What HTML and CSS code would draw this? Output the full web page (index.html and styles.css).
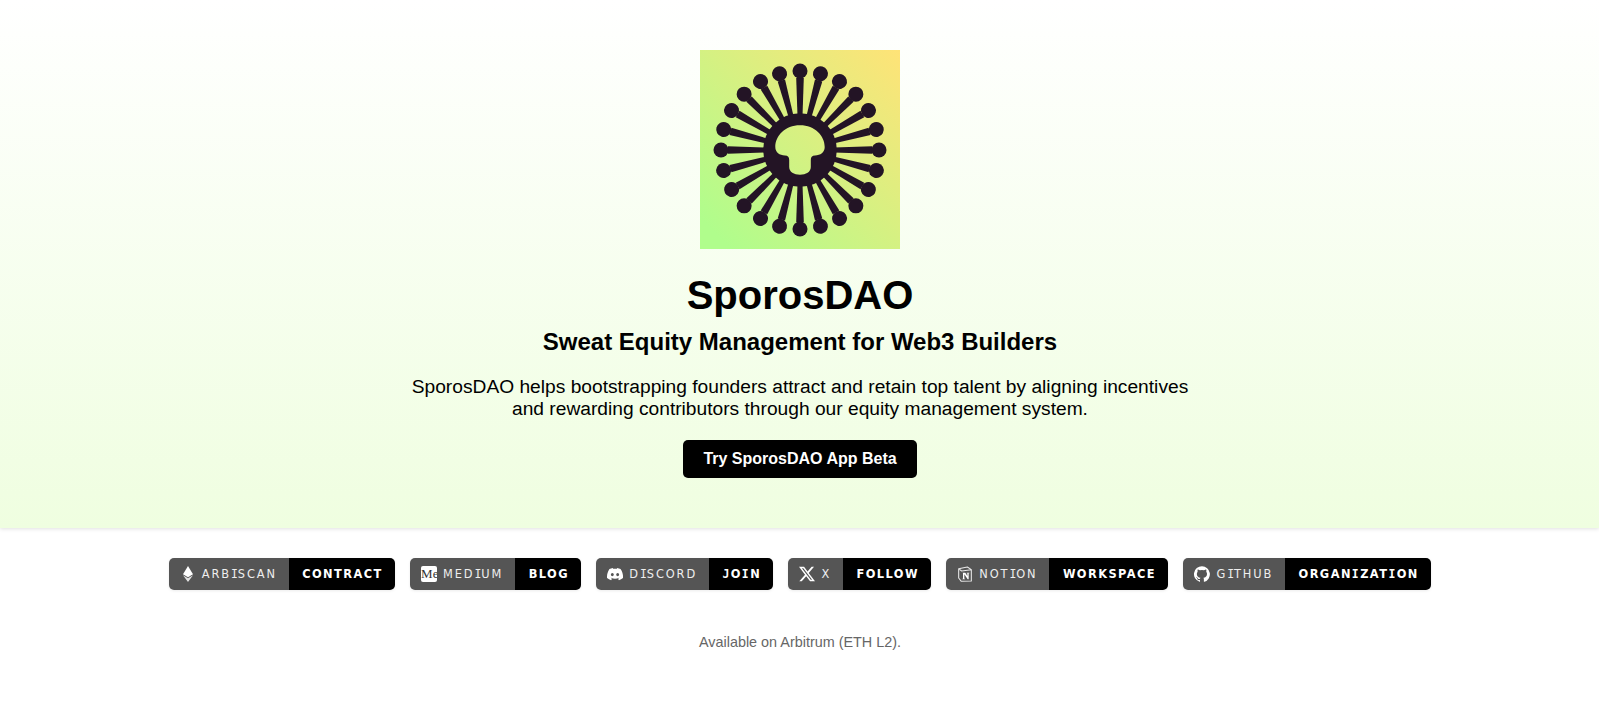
FILE: index.html
```html
<!DOCTYPE html>
<html lang="en">
<head>
<meta charset="utf-8">
<title>SporosDAO</title>
<link rel="stylesheet" href="styles.css">
</head>
<body>
<header class="hero">
  <svg class="logo" viewBox="-100 -100 200 199" aria-label="SporosDAO logo">
    <defs>
      <linearGradient id="bg" gradientUnits="userSpaceOnUse" x1="-100" y1="100" x2="100" y2="-100">
        <stop offset="0.08" stop-color="#b0fd8c"/>
        <stop offset="1" stop-color="#ffe377"/>
      </linearGradient>
      <g id="spoke">
        <path d="M-2.500 -34 L-3.800 -72 L3.800 -72 L2.500 -34 Z"/>
        <circle cx="0" cy="-79" r="7.500"/>
      </g>
    </defs>
    <rect x="-100" y="-100" width="200" height="199" fill="url(#bg)"/>
    <g fill="#231425">
      <use href="#spoke"/>
      <use href="#spoke" transform="rotate(15)"/>
      <use href="#spoke" transform="rotate(30)"/>
      <use href="#spoke" transform="rotate(45)"/>
      <use href="#spoke" transform="rotate(60)"/>
      <use href="#spoke" transform="rotate(75)"/>
      <use href="#spoke" transform="rotate(90)"/>
      <use href="#spoke" transform="rotate(105)"/>
      <use href="#spoke" transform="rotate(120)"/>
      <use href="#spoke" transform="rotate(135)"/>
      <use href="#spoke" transform="rotate(150)"/>
      <use href="#spoke" transform="rotate(165)"/>
      <use href="#spoke" transform="rotate(180)"/>
      <use href="#spoke" transform="rotate(195)"/>
      <use href="#spoke" transform="rotate(210)"/>
      <use href="#spoke" transform="rotate(225)"/>
      <use href="#spoke" transform="rotate(240)"/>
      <use href="#spoke" transform="rotate(255)"/>
      <use href="#spoke" transform="rotate(270)"/>
      <use href="#spoke" transform="rotate(285)"/>
      <use href="#spoke" transform="rotate(300)"/>
      <use href="#spoke" transform="rotate(315)"/>
      <use href="#spoke" transform="rotate(330)"/>
      <use href="#spoke" transform="rotate(345)"/>
      <circle r="36.800"/>
    </g>
    <path fill="url(#bg)" d="M0 -24.700 C-15 -24.700 -24.700 -14 -24.700 -3 C-24.700 2.500 -20.500 5.300 -15 5.500 C-12 5.600 -10.800 7 -10.800 10 L-10.800 17 C-10.800 22 -6 24.700 0 24.700 C6 24.700 10.800 22 10.800 17 L10.800 10 C10.800 7 12 5.600 15 5.500 C20.500 5.300 24.700 2.500 24.700 -3 C24.700 -14 15 -24.700 0 -24.700 Z"/>
  </svg>
  <h1 class="title">SporosDAO</h1>
  <h2 class="subtitle">Sweat Equity Management for Web3 Builders</h2>
  <p class="intro">SporosDAO helps bootstrapping founders attract and retain top talent by aligning incentives<br>and rewarding contributors through our equity management system.</p>
  <a class="cta" href="#">Try SporosDAO App Beta</a>
</header>
<main class="content">
  <nav class="badges">
    <a class="badge" href="#">
      <span class="badge-label">
        <svg class="badge-icon" viewBox="0 0 24 24"><path fill="#fff" d="M12 0 4.500 12.300 12 16.700 19.500 12.300Z"/><path fill="#e4e4e4" d="M4.500 13.800 12 24 19.500 13.800 12 18.200Z"/></svg>
        <span>ARB<span class="tail">I</span>SCAN</span>
      </span>
      <span class="badge-action">CONTRACT</span>
    </a>
    <a class="badge" href="#">
      <span class="badge-label">
        <span class="medium-icon">Me</span>
        <span>MED<span class="tail">I</span>UM</span>
      </span>
      <span class="badge-action">BLOG</span>
    </a>
    <a class="badge" href="#">
      <span class="badge-label">
        <svg class="badge-icon" viewBox="0 0 24 24"><path fill="#fff" d="M20.300 4.400A19.800 19.800 0 0 0 15.400 2.900c-.2.400-.5.900-.6 1.300a18.300 18.300 0 0 0-5.500 0C9.100 3.800 8.800 3.300 8.600 2.900A19.700 19.700 0 0 0 3.700 4.400C.6 9 -.3 13.600.1 18.100a19.900 19.900 0 0 0 6.100 3.100c.5-.7.900-1.400 1.300-2.100-.7-.3-1.400-.6-2-1l.5-.4a14.200 14.200 0 0 0 12.100 0l.5.4c-.6.4-1.300.7-2 1 .4.700.8 1.400 1.300 2.100a19.800 19.800 0 0 0 6.100-3.100C24.400 12.900 23.100 8.300 20.300 4.400ZM8 15.300c-1.200 0-2.200-1.100-2.200-2.400S6.800 10.500 8 10.500s2.200 1.100 2.200 2.400-1 2.400-2.200 2.400Zm8 0c-1.200 0-2.200-1.100-2.200-2.400s1-2.400 2.200-2.400 2.200 1.100 2.200 2.400-1 2.400-2.200 2.400Z"/></svg>
        <span>D<span class="tail">I</span>SCORD</span>
      </span>
      <span class="badge-action"><span><span class="tail">J</span>O<span class="tail">I</span>N</span></span>
    </a>
    <a class="badge" href="#">
      <span class="badge-label">
        <svg class="badge-icon" viewBox="0 0 24 24"><path fill="#fff" d="M18.900 1.150h3.680l-8.040 9.190L24 22.850h-7.410l-5.800-7.590-6.640 7.590H.47l8.600-9.830L0 1.150h7.590l5.240 6.930ZM17.610 20.640h2.040L6.490 3.240H4.300Z"/></svg>
        <span>X</span>
      </span>
      <span class="badge-action">FOLLOW</span>
    </a>
    <a class="badge" href="#">
      <span class="badge-label">
        <svg class="badge-icon" viewBox="0 0 24 24"><path fill="none" stroke="#e8e8e8" stroke-width="1.600" stroke-linejoin="round" d="M2.500 4.200 15.500 1.500 21.500 5.500V22.500L6.500 23 2.500 18Z M2.500 4.200 7 7.500 21.500 5.500"/><path fill="#fff" d="M8.500 10h4l3 5V11l-1-.3V10h4v.7l-1 .3v9h-1.500l-5-7.500V19l1.200.3v.7h-4.200v-.7l1-.3v-8.300l-.5-.2Z"/></svg>
        <span>NOT<span class="tail">I</span>ON</span>
      </span>
      <span class="badge-action">WORKSPACE</span>
    </a>
    <a class="badge" href="#">
      <span class="badge-label">
        <svg class="badge-icon" viewBox="0 0 24 24"><path fill="#fff" d="M12 .3a12 12 0 0 0-3.800 23.400c.6.100.8-.3.800-.6v-2c-3.300.7-4-1.600-4-1.600-.6-1.400-1.400-1.800-1.400-1.800-1-.7.100-.7.100-.7 1.200.1 1.800 1.200 1.800 1.200 1 1.800 2.800 1.300 3.500 1 .1-.8.400-1.300.8-1.600-2.700-.3-5.500-1.300-5.500-6 0-1.200.5-2.300 1.200-3.100-.1-.4-.5-1.600.1-3.200 0 0 1-.3 3.300 1.200a11.500 11.500 0 0 1 6 0c2.300-1.500 3.300-1.200 3.300-1.200.7 1.600.2 2.800.1 3.200.8.800 1.200 1.900 1.200 3.100 0 4.600-2.800 5.700-5.500 6 .4.400.8 1.100.8 2.200v3.300c0 .3.200.7.800.6A12 12 0 0 0 12 .3Z"/></svg>
        <span>G<span class="tail">I</span>THUB</span>
      </span>
      <span class="badge-action"><span>ORGAN<span class="tail">I</span>ZAT<span class="tail">I</span>ON</span></span>
    </a>
  </nav>
  <p class="note">Available on Arbitrum (ETH L2).</p>
</main>
</body>
</html>
```
FILE: styles.css
```css
* { box-sizing: border-box; }
html, body { margin: 0; padding: 0; }
body {
  background: #fff;
  color: #000;
  font-family: "Liberation Sans", Arial, sans-serif;
}
.hero {
  display: flex;
  flex-direction: column;
  align-items: center;
  height: 528px;
  padding: 50px 0 0 1px;
  background: linear-gradient(180deg, #ffffff 0%, #effee0 100%);
  box-shadow: 0 1px 4px rgba(0, 0, 0, 0.12);
  text-align: center;
}
.logo { display: block; width: 200px; height: 199px; }
.title {
  margin: 23px 0 0;
  font-size: 40px;
  line-height: 46px;
  font-weight: 700;
}
.subtitle {
  margin: 10px 0 0;
  font-size: 24px;
  line-height: 28px;
  font-weight: 700;
}
.intro {
  margin: 20px 0 0;
  font-size: 19.2px;
  line-height: 22px;
}
.cta {
  display: block;
  margin-top: 20px;
  padding: 0 20.5px;
  height: 38px;
  line-height: 38px;
  background: #000;
  color: #fff;
  border-radius: 5px;
  font-size: 16px;
  font-weight: 700;
  text-decoration: none;
}
.content {
  display: flex;
  flex-direction: column;
  align-items: center;
  padding-left: 1px;
}
.badges {
  display: flex;
  gap: 15px;
  margin-top: 30px;
}
.badge {
  display: flex;
  height: 32px;
  border-radius: 5px;
  overflow: hidden;
  text-decoration: none;
  font-family: "DejaVu Sans", Verdana, sans-serif;
  font-size: 11.4px;
  color: #fff;
  box-shadow: 0 1px 3px rgba(0, 0, 0, 0.08);
}
.badge-label {
  display: flex;
  align-items: center;
  gap: 6px;
  padding: 0 11.7px 0 11px;
  background: #555;
  color: #eee;
  letter-spacing: 1.87px;
}
.badge-action {
  display: flex;
  align-items: center;
  padding: 0 12.4px 0 13.7px;
  background: #000;
  font-weight: 700;
  letter-spacing: 1.43px;
}
.tail {
  font-family: "DejaVu Sans Mono", monospace;
}
.badge-label .tail { letter-spacing: 0; }
.badge-action .tail { letter-spacing: 1.43px; }
.badge-icon { display: block; width: 16px; height: 16px; flex: none; }
.medium-icon {
  display: block;
  flex: none;
  width: 16px;
  height: 16px;
  overflow: hidden;
  background: #fff;
  color: #333;
  border-radius: 2px;
  font-family: "Liberation Serif", serif;
  font-size: 13px;
  font-weight: 400;
  line-height: 16px;
  letter-spacing: 0;
  white-space: nowrap;
}
.note {
  margin: 44px 0 0;
  font-size: 14.4px;
  line-height: 16px;
  color: #666;
}
```
